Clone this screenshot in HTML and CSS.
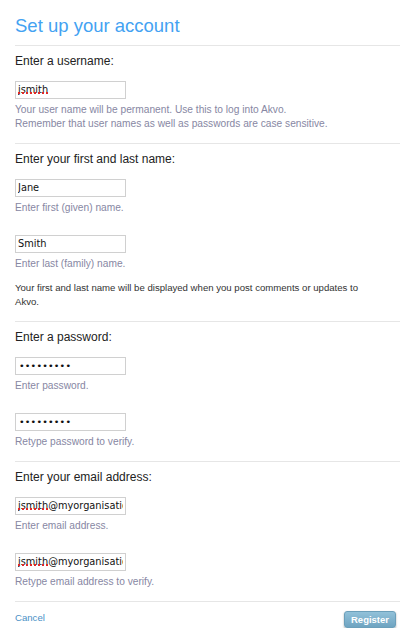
FILE: index.html
```html
<!DOCTYPE html>
<html lang="en">
<head>
<meta charset="utf-8">
<title>Set up your account</title>
<link rel="stylesheet" href="styles.css">
</head>
<body>
<div class="page">
  <h1 class="title">Set up your account</h1>

  <section class="section">
    <label class="label" for="username">Enter a username:</label>
    <div class="field">
      <input class="input" id="username" type="text" value="jsmith" spellcheck="false">
      <span class="squiggle" aria-hidden="true">jsmith</span>
    </div>
    <p class="help">Your user name will be permanent. Use this to log into Akvo.<br>Remember that user names as well as passwords are case sensitive.</p>
  </section>

  <section class="section">
    <label class="label" for="first">Enter your first and last name:</label>
    <div class="field">
      <input class="input" id="first" type="text" value="Jane" spellcheck="false">
    </div>
    <p class="help">Enter first (given) name.</p>
    <div class="field field-next">
      <input class="input" id="last" type="text" value="Smith" spellcheck="false">
    </div>
    <p class="help">Enter last (family) name.</p>
    <p class="note">Your first and last name will be displayed when you post comments or updates to Akvo.</p>
  </section>

  <section class="section">
    <label class="label" for="pw1">Enter a password:</label>
    <div class="field">
      <input class="input" id="pw1" type="password" value="secret123">
    </div>
    <p class="help">Enter password.</p>
    <div class="field field-next">
      <input class="input" id="pw2" type="password" value="secret123">
    </div>
    <p class="help">Retype password to verify.</p>
  </section>

  <section class="section">
    <label class="label" for="em1">Enter your email address:</label>
    <div class="field">
      <input class="input" id="em1" type="text" value="jsmith@myorganisation.org" spellcheck="false">
      <span class="squiggle" aria-hidden="true">jsmith</span>
    </div>
    <p class="help">Enter email address.</p>
    <div class="field field-next">
      <input class="input" id="em2" type="text" value="jsmith@myorganisation.org" spellcheck="false">
      <span class="squiggle" aria-hidden="true">jsmith</span>
    </div>
    <p class="help">Retype email address to verify.</p>
  </section>

  <footer class="footer">
    <a class="cancel" href="#">Cancel</a>
    <button class="register" type="button">Register</button>
  </footer>
</div>
</body>
</html>
```

FILE: styles.css
```css
html, body {
  margin: 0;
  padding: 0;
  background: #ffffff;
}

body {
  font-family: "Liberation Sans", Arial, sans-serif;
  color: #222222;
}

.page {
  padding: 0 4px 0 15px;
}

.title {
  margin: 15px 0 8px;
  font-size: 18.5px;
  line-height: 22px;
  font-weight: normal;
  color: #43a2f2;
}

.section {
  border-top: 1px solid #e6e6e6;
  margin-right: -4px;
  padding: 7px 0 12px;
}

.label {
  display: block;
  font-size: 12px;
  line-height: 16px;
  color: #222222;
}

.field {
  position: relative;
  width: 111px;
  height: 18px;
  margin-top: 10px;
}

.field-next {
  margin-top: 18px;
}

.input {
  box-sizing: border-box;
  width: 111px;
  height: 18px;
  margin: 0;
  padding: 0 2px;
  border: 1px solid #d0d0d0;
  border-radius: 0;
  background: #ffffff;
  font-family: "DejaVu Sans", sans-serif;
  font-size: 9.8px;
  color: #111111;
  outline: none;
}

.input[type="password"] {
  font-size: 9.5px;
  letter-spacing: 0.2px;
  padding-left: 3px;
}

.squiggle {
  position: absolute;
  left: 3px;
  top: 2px;
  font-family: "DejaVu Sans", sans-serif;
  font-size: 9.8px;
  line-height: 12px;
  color: transparent;
  text-decoration-line: underline;
  text-decoration-style: dotted;
  text-decoration-color: #e02828;
  text-decoration-thickness: 1.5px;
  text-underline-offset: 2px;
  pointer-events: none;
}

.help {
  margin: 6px 0 0;
  font-size: 10.2px;
  line-height: 14px;
  color: #8787a3;
}

.note {
  margin: 10px 0 0;
  max-width: 360px;
  font-size: 9.6px;
  line-height: 14px;
  color: #333333;
}

.footer {
  border-top: 1px solid #e6e6e6;
  margin-right: -4px;
  padding: 9px 4px 0 0;
  display: flex;
  justify-content: space-between;
  align-items: flex-start;
}

.cancel {
  margin-top: 1px;
  font-size: 9.6px;
  line-height: 12px;
  color: #4a90c6;
  text-decoration: none;
}

.register {
  width: 52px;
  height: 17px;
  padding: 0;
  border: 1px solid #6b9fba;
  border-radius: 3px;
  background: linear-gradient(#91c1d9, #6fa4c1);
  box-shadow: 0 1px 2px rgba(0, 0, 0, 0.35);
  color: #ffffff;
  font-family: "Liberation Sans", Arial, sans-serif;
  font-size: 9.5px;
  font-weight: bold;
  line-height: 15px;
}
```
